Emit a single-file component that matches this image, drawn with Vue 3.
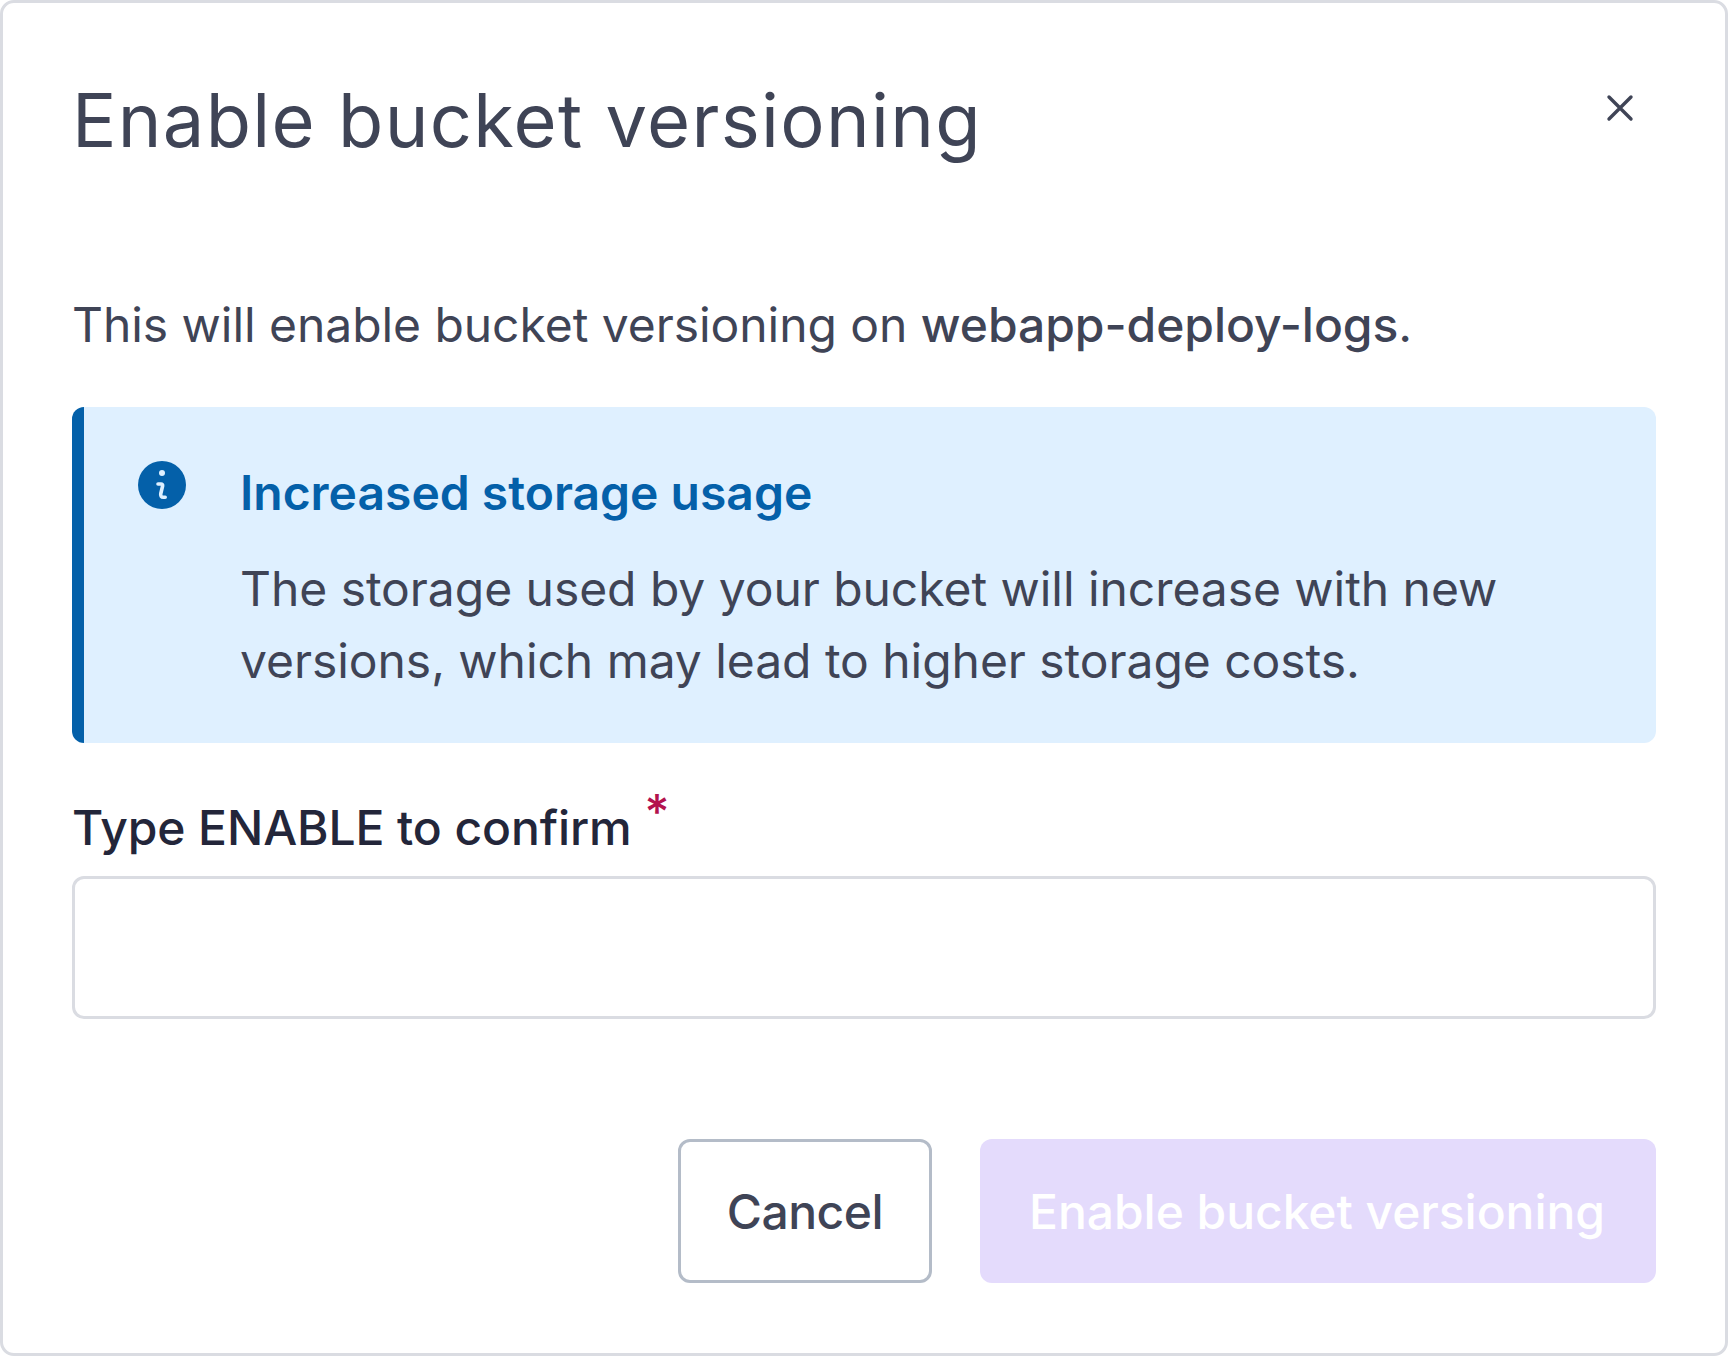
<template>
  <div class="modal">
    <div class="modal-header">
      <h2 class="title">Enable bucket versioning</h2>
      <button class="close" aria-label="Close">
        <svg width="28" height="28" viewBox="0 0 28 28" fill="none">
          <path d="M3 3L25 25M25 3L3 25" stroke="#3f4456" stroke-width="3.4" stroke-linecap="round" />
        </svg>
      </button>
    </div>

    <p class="intro">This will enable bucket versioning on <strong>webapp-deploy-logs</strong>.</p>

    <div class="alert">
      <svg class="alert-icon" width="48" height="48" viewBox="0 0 48 48">
        <circle cx="24" cy="24" r="24" fill="#0460a9" />
        <circle cx="24" cy="12" r="3" fill="#dff0ff" />
        <path d="M20 23h3c1.3 0 1.9.8 1.6 2l-1.8 7.5c-.5 2.2.5 3.8 2.5 3.8h1.9" fill="none" stroke="#dff0ff" stroke-width="3.6" stroke-linecap="round" stroke-linejoin="round" />
      </svg>
      <div class="alert-body">
        <h3 class="alert-title">Increased storage usage</h3>
        <p class="alert-text">The storage used by your bucket will increase with new versions, which may lead to higher storage costs.</p>
      </div>
    </div>

    <label class="label" for="confirm">Type ENABLE to confirm<span class="required">*</span></label>
    <input id="confirm" class="input" type="text" />

    <div class="actions">
      <button class="button cancel">Cancel</button>
      <button class="button submit" disabled>Enable bucket versioning</button>
    </div>
  </div>
</template>

<script setup>
</script>

<style scoped>
.modal {
  box-sizing: border-box;
  width: 1728px;
  height: 1356px;
  padding: 69px 69px 0;
  background: #fff;
  border: 3px solid #dadce2;
  border-radius: 14px;
  font-family: Inter, "Liberation Sans", sans-serif;
  color: #3f4456;
}

.modal-header {
  display: flex;
  justify-content: space-between;
  align-items: flex-start;
  height: 128px;
}

.title {
  margin: 0;
  font-size: 74px;
  line-height: 96px;
  font-weight: 400;
  letter-spacing: 1.3px;
}

.close {
  padding: 0;
  border: none;
  background: none;
  margin: 22px 22px 0 0;
}

.intro {
  margin: 89px 0 0;
  font-size: 48px;
  line-height: 72px;
  letter-spacing: -0.05px;
}

.intro strong {
  font-weight: 500;
}

.alert {
  box-sizing: border-box;
  display: flex;
  gap: 54px;
  height: 336px;
  margin-top: 46px;
  padding: 54px 64px 0 54px;
  background: #dff0ff;
  border-left: 12px solid #0460a9;
  border-radius: 12px;
}

.alert-icon {
  flex: none;
}

.alert-title {
  margin: 0;
  font-size: 48px;
  line-height: 64px;
  font-weight: 600;
  color: #0460a9;
}

.alert-text {
  margin: 28px 0 0;
  font-size: 48px;
  line-height: 72px;
  letter-spacing: -0.05px;
}

.label {
  display: block;
  margin-top: 33px;
  font-size: 48px;
  line-height: 72px;
  font-weight: 500;
  letter-spacing: -0.1px;
  color: #23263a;
}

.required {
  margin-left: 13px;
  color: #b3124e;
  vertical-align: 16px;
}

.input {
  box-sizing: border-box;
  display: block;
  width: 100%;
  height: 143px;
  margin-top: 12px;
  background: #fff;
  border: 3px solid #dadce2;
  border-radius: 12px;
}

.actions {
  display: flex;
  justify-content: flex-end;
  gap: 48px;
  margin-top: 120px;
}

.button {
  box-sizing: border-box;
  height: 144px;
  font-family: Inter, "Liberation Sans", sans-serif;
  font-size: 48px;
  font-weight: 500;
  border-radius: 12px;
}

.cancel {
  padding: 0 46px;
  background: #fff;
  color: #3f4456;
  letter-spacing: -0.5px;
  border: 3px solid #b4bcc8;
}

.submit {
  padding: 0 51px 0 49px;
  background: #e4dbfc;
  color: #fff;
  letter-spacing: -0.05px;
  border: none;
}
</style>

<style>
body {
  margin: 0;
  background: #fff;
}
</style>
